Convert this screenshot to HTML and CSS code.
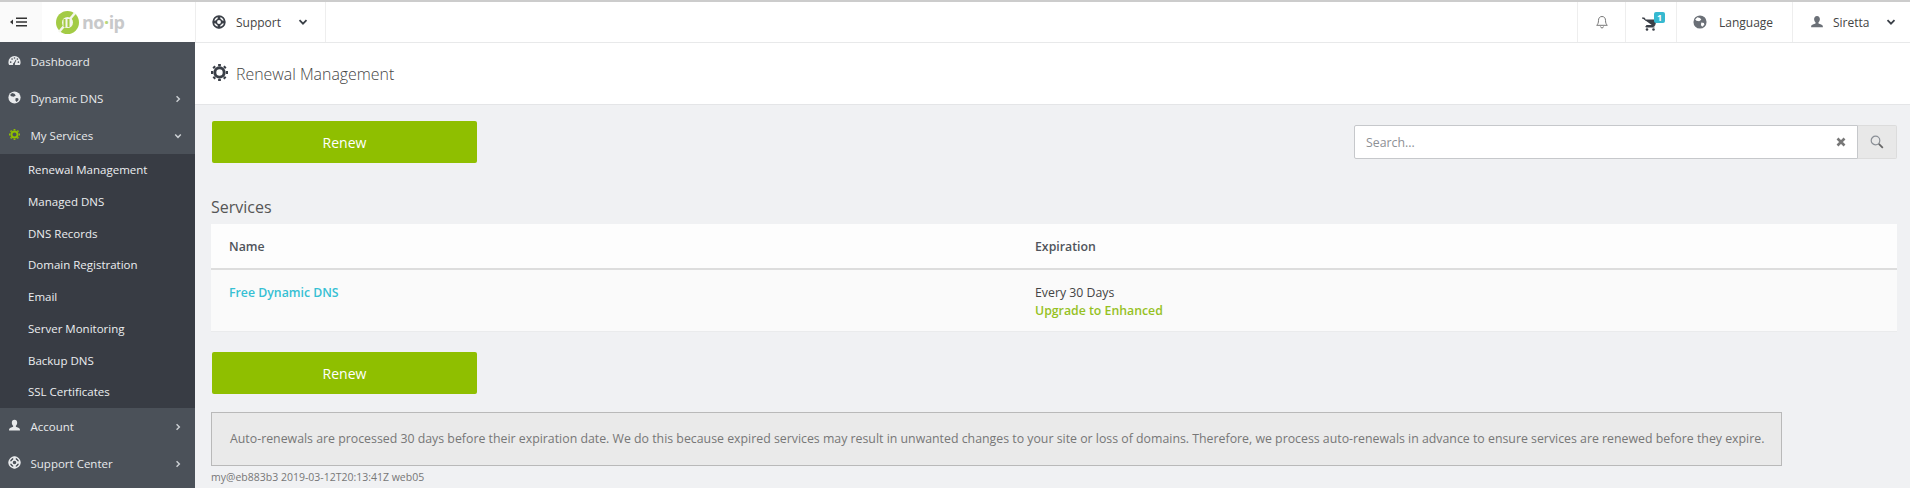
FILE: index.html
```html
<!DOCTYPE html>
<html lang="en">
<head>
<meta charset="utf-8">
<title>Renewal Management</title>
<link rel="stylesheet" href="styles.css">
</head>
<body>
<svg class="defs" width="0" height="0" aria-hidden="true">
  <symbol id="i-globe" viewBox="0 0 16 16"><circle cx="8" cy="8" r="7.500" fill="currentColor"/><path d="M5 2.500l3 1 1.500 2-2.500 1.500-3-.5-1.500-1.500zM9.500 8.500l3 .5.5 2-2.500 2.500-1.500-2z" fill="var(--cut,#4b5159)"/></symbol>
  <symbol id="i-ring" viewBox="0 0 16 16"><circle cx="8" cy="8" r="6.700" fill="none" stroke="currentColor" stroke-width="1.800"/><circle cx="8" cy="8" r="3" fill="none" stroke="currentColor" stroke-width="1.600"/><path d="M8 1v14M1 8h14" stroke="currentColor" stroke-width="3.200" stroke-dasharray="4 6 4"/></symbol>
  <symbol id="i-gear" viewBox="0 0 16 16"><circle cx="8" cy="8" r="4.400" fill="none" stroke="currentColor" stroke-width="2.800"/><path d="M8 0v16M0 8h16M2.300 2.300l11.400 11.400M13.700 2.300L2.300 13.700" stroke="currentColor" stroke-width="2.600" stroke-dasharray="2 12 2" fill="none"/></symbol>
  <symbol id="i-user" viewBox="0 0 16 16"><path d="M8 1c2.200 0 3.300 1.500 3.300 3.600 0 1.500-.7 3-1.600 3.800v1.200c1.700.7 5 1.300 5 3.400v1H1.300v-1c0-2.100 3.300-2.700 5-3.400V8.400C5.400 7.600 4.700 6.100 4.700 4.600 4.700 2.500 5.800 1 8 1z" fill="currentColor"/></symbol>
  <symbol id="i-dash" viewBox="0 0 16 16"><path d="M8 2.500A7.500 7.500 0 0 0 .5 10c0 1.300.3 2.500.9 3.500h13.200c.6-1 .9-2.200.9-3.500A7.500 7.500 0 0 0 8 2.500z" fill="currentColor"/><g fill="#4b5159"><circle cx="3.300" cy="10" r="1"/><circle cx="5" cy="6.300" r="1"/><circle cx="8" cy="4.900" r="1"/><circle cx="11.500" cy="6.300" r="1"/><circle cx="12.800" cy="10" r="1"/><path d="M7.200 11.200l2.300-4.200.8.400-1.800 4.400a1.300 1.300 0 1 1-1.300-.6z"/></g></symbol>
  <symbol id="i-chev" viewBox="0 0 10 10"><path d="M1.500 3.200L5 6.700l3.500-3.500" fill="none" stroke="currentColor" stroke-width="1.800"/></symbol>
</svg>

<header class="topbar">
  <div class="brand">
    <button class="toggle" type="button" aria-label="Toggle menu">
      <svg width="17" height="10" viewBox="0 0 17 10"><path d="M0 5l3-2.500v5z" fill="#333"/><path d="M6 1.200h11M6 5h11M6 8.800h11" stroke="#333" stroke-width="1.600"/></svg>
    </button>
    <div class="logo">
      <svg class="logo-mark" width="23" height="23" viewBox="0 0 23 23"><circle cx="11.500" cy="11.500" r="11.500" fill="#a3cb45"/><circle cx="11.500" cy="11.500" r="5.500" fill="#f4f6ee"/><path d="M3 21L19 2" stroke="#f4f6ee" stroke-width="2.500"/><path d="M8.500 8v8M12.500 8v8" stroke="#a3cb45" stroke-width="2"/></svg>
      <span class="logo-text">no<span class="logo-dot">·</span>ip</span>
    </div>
  </div>
  <div class="top-item top-support">
    <svg class="ico-14 ink" width="14" height="14"><use href="#i-ring"/></svg>
    <span>Support</span>
    <svg class="chev ink" width="10" height="10"><use href="#i-chev"/></svg>
  </div>
  <div class="top-spacer"></div>
  <div class="top-item top-bell">
    <svg width="12" height="14" viewBox="0 0 12 14"><path d="M6 1.500c2.300 0 3.500 1.700 3.500 3.800 0 2.700.7 3.900 1.800 5H.7c1.100-1.100 1.800-2.300 1.800-5C2.500 3.200 3.700 1.500 6 1.500zM4.500 11.500c.2 1 .8 1.500 1.500 1.500s1.300-.5 1.500-1.500" fill="none" stroke="#777" stroke-width="1"/></svg>
  </div>
  <div class="top-item top-cart">
    <svg class="cart" width="15" height="14" viewBox="0 0 15 14"><path d="M0 1h2.500l.7 2H14l-1.300 5.500H4.500L3.800 10h8.700" fill="#3a3f47" stroke="#3a3f47" stroke-width="1"/><circle cx="5" cy="12.500" r="1.300" fill="#3a3f47"/><circle cx="11.500" cy="12.500" r="1.300" fill="#3a3f47"/></svg>
    <span class="badge">1</span>
  </div>
  <div class="top-item top-lang">
    <svg class="ico-14 soft cut-white" width="14" height="14"><use href="#i-globe"/></svg>
    <span>Language</span>
  </div>
  <div class="top-item top-user">
    <svg class="ico-14 soft" width="14" height="14"><use href="#i-user"/></svg>
    <span>Siretta</span>
    <svg class="chev ink" width="10" height="10"><use href="#i-chev"/></svg>
  </div>
</header>

<div class="shell">
  <nav class="sidebar">
    <a class="nav-item"><svg class="nav-ico" width="13" height="13"><use href="#i-dash"/></svg><span>Dashboard</span></a>
    <a class="nav-item"><svg class="nav-ico" width="13" height="13"><use href="#i-globe"/></svg><span>Dynamic DNS</span><svg class="nav-chev right" width="8" height="8"><use href="#i-chev"/></svg></a>
    <a class="nav-item"><svg class="nav-ico green" width="11" height="11"><use href="#i-gear"/></svg><span>My Services</span><svg class="nav-chev" width="8" height="8"><use href="#i-chev"/></svg></a>
    <ul class="subnav">
      <li>Renewal Management</li>
      <li>Managed DNS</li>
      <li>DNS Records</li>
      <li>Domain Registration</li>
      <li>Email</li>
      <li>Server Monitoring</li>
      <li>Backup DNS</li>
      <li>SSL Certificates</li>
    </ul>
    <a class="nav-item"><svg class="nav-ico" width="13" height="13"><use href="#i-user"/></svg><span>Account</span><svg class="nav-chev right" width="8" height="8"><use href="#i-chev"/></svg></a>
    <a class="nav-item"><svg class="nav-ico" width="13" height="13"><use href="#i-ring"/></svg><span>Support Center</span><svg class="nav-chev right" width="8" height="8"><use href="#i-chev"/></svg></a>
  </nav>

  <main class="main">
    <div class="page-head">
      <svg class="head-ico" width="17" height="17"><use href="#i-gear"/></svg>
      <h1>Renewal Management</h1>
    </div>
    <div class="content">
      <div class="toolbar">
        <button class="btn" type="button">Renew</button>
        <div class="search">
          <div class="search-field">
            <span class="placeholder">Search...</span>
            <svg width="10" height="10" viewBox="0 0 10 10"><path d="M1.500 1.500l7 7M8.500 1.500l-7 7" stroke="#777" stroke-width="2.600"/></svg>
          </div>
          <div class="search-btn">
            <svg width="14" height="14" viewBox="0 0 14 14"><circle cx="5.500" cy="5.500" r="4.300" fill="none" stroke="#8a8f96" stroke-width="1.200"/><path d="M8.800 8.800l4 4" stroke="#666" stroke-width="1.800"/></svg>
          </div>
        </div>
      </div>
      <h2>Services</h2>
      <div class="table">
        <div class="row row-head">
          <div class="col-name">Name</div>
          <div>Expiration</div>
        </div>
        <div class="row row-body">
          <div class="col-name"><a class="link">Free Dynamic DNS</a></div>
          <div class="col-exp">
            <div>Every 30 Days</div>
            <a class="upgrade">Upgrade to Enhanced</a>
          </div>
        </div>
      </div>
      <button class="btn btn-second" type="button">Renew</button>
      <div class="notice">Auto-renewals are processed 30 days before their expiration date. We do this because expired services may result in unwanted changes to your site or loss of domains. Therefore, we process auto-renewals in advance to ensure services are renewed before they expire.</div>
      <div class="build">my@eb883b3 2019-03-12T20:13:41Z web05</div>
    </div>
  </main>
</div>
</body>
</html>
```

FILE: styles.css
```css
* { box-sizing: border-box; }
html, body { margin: 0; height: 100%; overflow: hidden; }
body {
  font-family: "Open Sans", "Liberation Sans", sans-serif;
  font-size: 12.300px;
  color: #555;
  background: #f0f1f3;
  display: flex;
  flex-direction: column;
}
.defs { position: absolute; }

.topbar {
  height: 42px;
  flex: none;
  display: flex;
  background: #fff;
  border-top: 2px solid #ccc;
  color: #444;
  font-size: 12px;
}
.brand { width: 196px; display: flex; border-right: 1px solid #eee; flex: none; }
.toggle {
  width: 42px;
  border: 0;
  padding: 0 5px 0 0;
  background: #fafafa;
  display: flex;
  align-items: center;
  justify-content: center;
}
.logo { display: flex; align-items: center; margin-left: 14px; gap: 3px; }
.logo-text { font-size: 18px; font-weight: 700; color: #c8c9ca; letter-spacing: -0.500px; line-height: 1; }
.logo-dot { color: #b9d77a; }
.top-item { display: flex; align-items: center; border-right: 1px solid #eee; position: relative; flex: none; }
.top-support { width: 130px; padding-left: 16px; gap: 10px; }
.top-support .chev { margin-left: 7px; }
.top-spacer { flex: 1; border-right: 1px solid #eee; }
.top-bell { width: 48px; justify-content: center; }
.top-cart { width: 51px; justify-content: center; }
.top-lang { width: 116px; padding-left: 16px; gap: 12px; }
.top-user { width: 117px; padding-left: 17px; gap: 9px; border-right: 0; }
.top-user .chev { margin-left: 8px; }
.cart { margin: 3px 4px 0 0; }
.ink { color: #3a3f47; }
.soft { color: #6b7077; }
.cut-white { --cut: #fff; }
.badge {
  position: absolute;
  top: 10px;
  left: 28px;
  width: 11px;
  height: 11px;
  background: #36b9d0;
  border-radius: 2px;
  color: #fff;
  font-size: 9px;
  font-weight: 700;
  line-height: 11px;
  text-align: center;
}

.shell { flex: 1; display: flex; min-height: 0; }
.sidebar { width: 195px; flex: none; padding-top: 1px; background: #4b5159; color: #e8eaec; font-size: 11.500px; }
.nav-item { height: 37px; display: flex; align-items: center; padding-left: 8px; gap: 9.500px; position: relative; }
.nav-ico { color: #e8eaec; flex: none; margin-top: -2px; }
.nav-ico.green { color: #8fbf00; margin-left: 1px; margin-right: 1px; }
.nav-chev { position: absolute; right: 13px; top: 15px; color: #ccd0d4; }
.nav-chev.right { transform: rotate(-90deg); }
.subnav { list-style: none; margin: 0; padding: 0; height: 254px; background: #383c44; }
.subnav li { height: 31.750px; line-height: 31.750px; padding-left: 28px; color: #eceef0; }

.main { flex: 1; min-width: 0; }
.page-head {
  height: 63px;
  background: #fff;
  border-top: 1px solid #e8e9ea;
  border-bottom: 1px solid #e4e5e7;
  display: flex;
  align-items: center;
  padding-left: 16px;
  gap: 8px;
}
.head-ico { color: #3a3f47; margin-top: -3px; }
.page-head h1 { margin: 0; font-size: 15.900px; font-weight: 300; color: #444; }
.content { padding: 16px 13px 0 16px; }
.toolbar { display: flex; justify-content: space-between; }
.btn {
  width: 265px;
  height: 42px;
  margin-left: 1px;
  border: 0;
  border-radius: 2px;
  background: #8fbf00;
  color: #fff;
  font-family: inherit;
  font-size: 14px;
  padding: 0;
}
.search { display: flex; width: 543px; height: 34px; margin-top: 4px; }
.search-field {
  flex: 1;
  background: #fff;
  border: 1px solid #c6c8cb;
  border-radius: 2px 0 0 2px;
  display: flex;
  align-items: center;
  justify-content: space-between;
  padding: 0 11px;
}
.placeholder { color: #8d9095; }
.search-btn {
  width: 39px;
  background: #e8e8e8;
  border: 1px solid #dcdcdc;
  border-left: 0;
  border-radius: 0 2px 2px 0;
  display: flex;
  align-items: center;
  justify-content: center;
}
h2 { margin: 33px 0 0; font-size: 16px; font-weight: 400; line-height: 22px; color: #555; height: 28px; }
.table { background: #fafafa; }
.row { display: flex; padding: 0 18px; }
.row-head { height: 46px; align-items: center; background: #fdfdfd; border-bottom: 2px solid #ddd; font-weight: 600; color: #50545b; }
.row-body { height: 62px; padding-top: 14px; border-bottom: 1px solid #eaebec; font-weight: 400; }
.col-name { width: 806px; }
.col-exp { line-height: 18px; color: #444; }
.link { color: #36c0d3; font-weight: 600; }
.upgrade { color: #95c11f; font-weight: 600; }
.btn-second { display: block; margin-top: 20px; }
.notice {
  width: 1571px;
  height: 54px;
  margin-top: 18px;
  border: 1px solid #b9b9b9;
  background: #eaeaea;
  color: #777;
  font-size: 12.330px;
  padding-left: 18px;
  line-height: 52px;
  white-space: nowrap;
}
.build { margin-top: 4px; font-size: 10.500px; line-height: 14px; color: #777; }
```
